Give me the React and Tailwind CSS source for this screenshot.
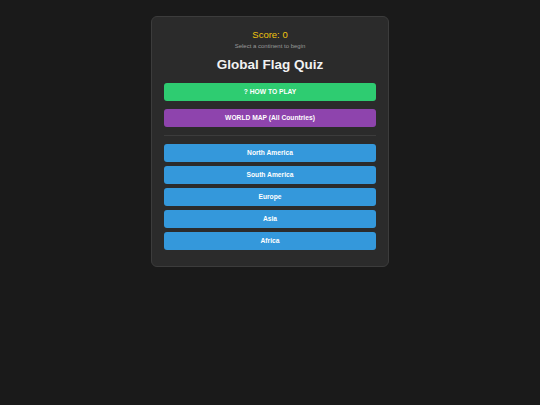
import { useState } from 'react';

const continents = ["North America", "South America", "Europe", "Asia", "Africa"];

const App = () => {
  const [score] = useState(0);

  return (
    <div className="min-h-screen bg-[#1a1a1a] pt-4 font-['Liberation_Sans',Arial,sans-serif]">
      <div className="mx-auto w-[238px] rounded-[6px] border border-[#3c3c3c] bg-[#2b2b2b] px-3 pt-3 pb-4 text-center">
        <div className="text-[9.5px] leading-[11px] text-[#f1c40f]">Score: {score}</div>
        <div className="mt-[2px] text-[6px] leading-[9px] text-[#9a9a9a]">Select a continent to begin</div>
        <h1 className="mt-[6px] text-[13.5px] leading-[16px] font-bold text-[#f2f2f2]">Global Flag Quiz</h1>

        <button className="mt-[10px] flex h-[18px] w-full items-center justify-center rounded-[3px] bg-[#2ecc71] text-[6.7px] font-bold text-white">
          ? HOW TO PLAY
        </button>
        <button className="mt-2 flex h-[18px] w-full items-center justify-center rounded-[3px] bg-[#8e44ad] text-[6.7px] font-bold text-white">
          WORLD MAP (All Countries)
        </button>

        <div className="mt-2 h-px bg-[#3c3c3c]" />

        <div className="mt-2 flex flex-col gap-1">
          {continents.map(c => (
            <button key={c} className="flex h-[18px] w-full items-center justify-center rounded-[3px] bg-[#3498db] text-[6.7px] font-bold text-white">
              {c}
            </button>
          ))}
        </div>
      </div>
    </div>
  );
};
export default App;
